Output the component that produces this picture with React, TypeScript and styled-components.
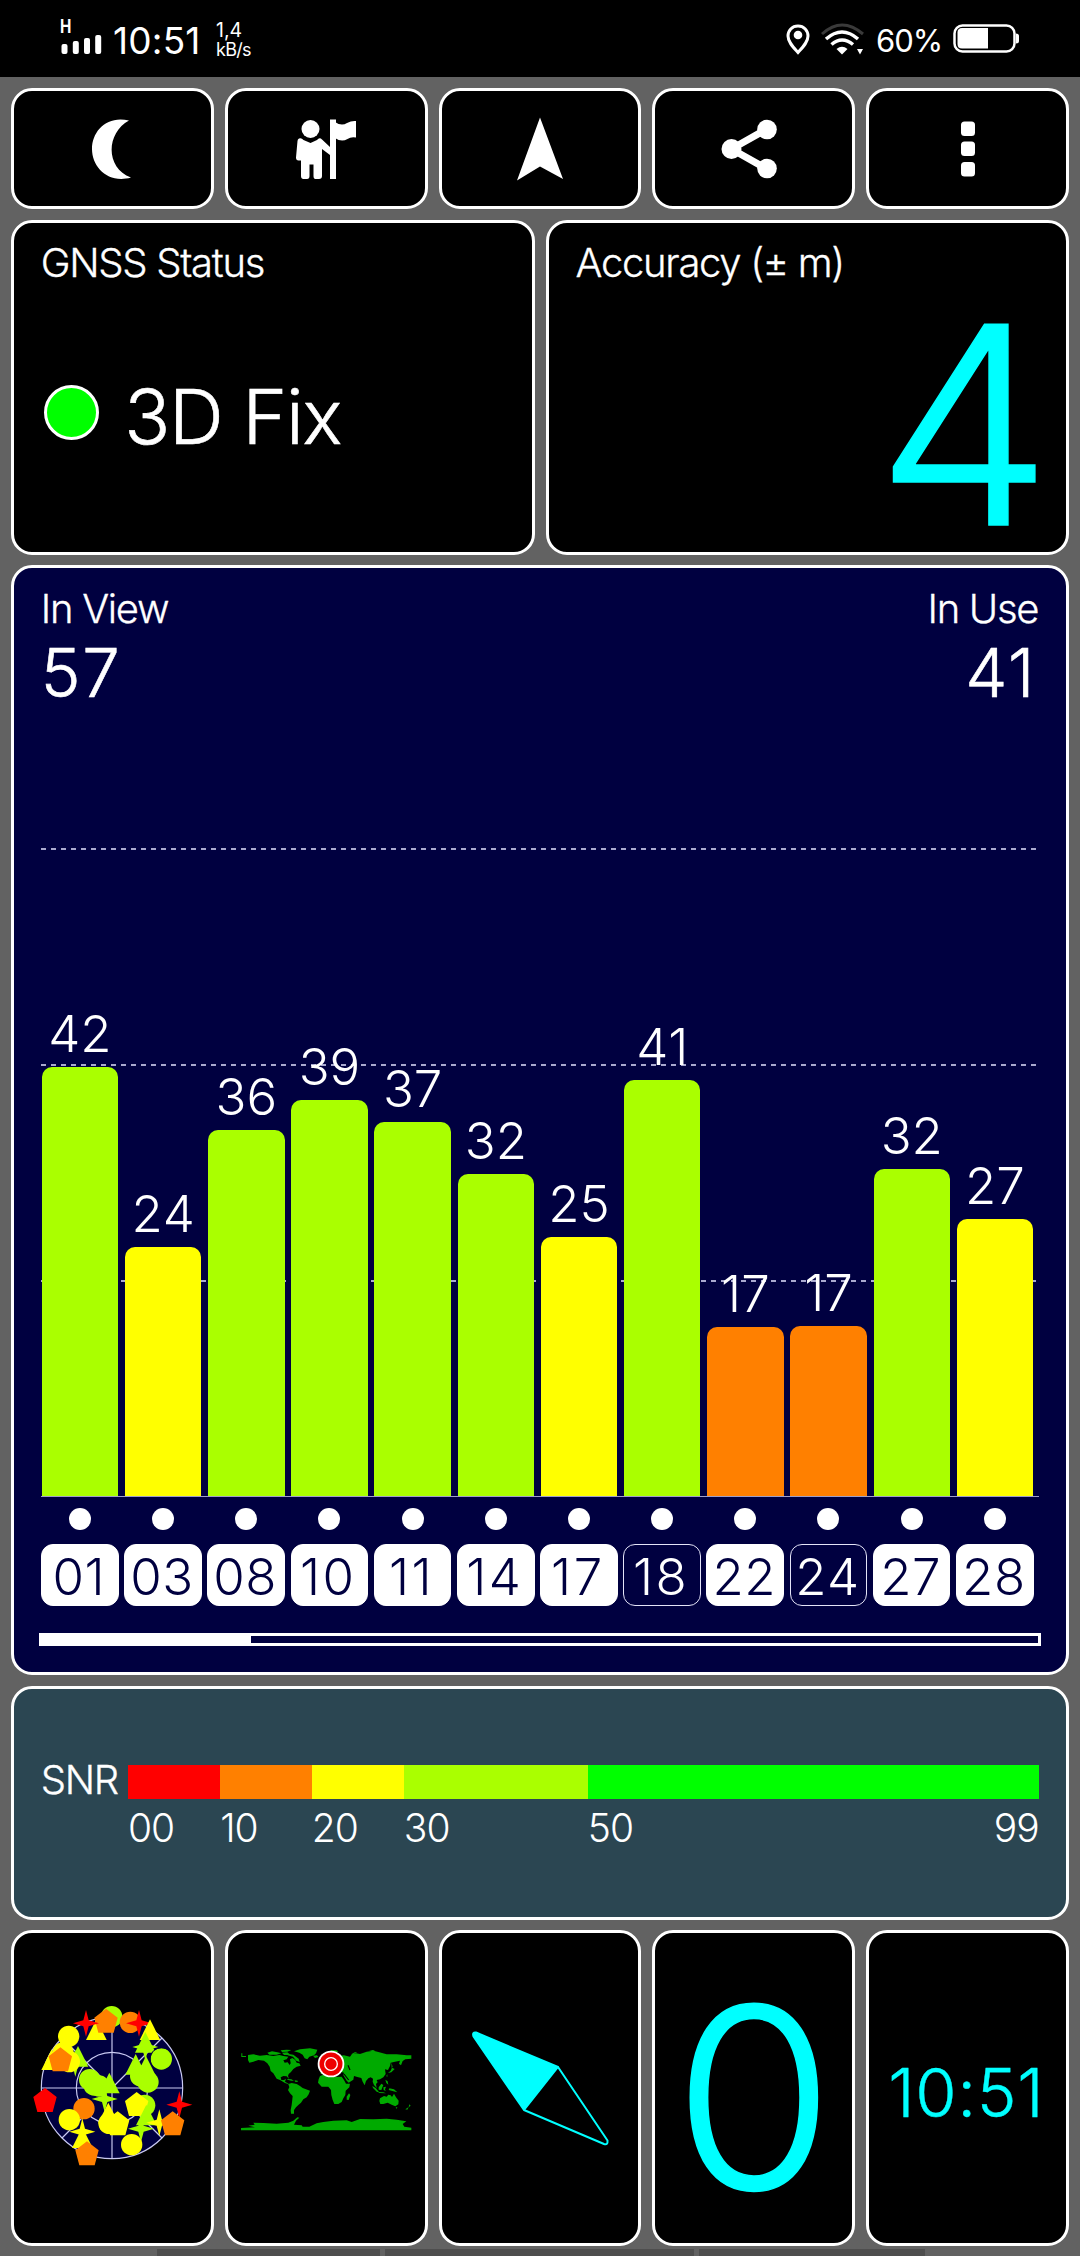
import React from "react";
import styled, { createGlobalStyle } from "styled-components";

const LIME = "#aaff00";
const YELLOW = "#ffff00";
const ORANGE = "#ff8000";
const RED = "#ff0000";
const GREEN = "#00ff00";
const CYAN = "#00ffff";
const NAVY = "#000040";

const GlobalStyle = createGlobalStyle`
  *, *::before, *::after { box-sizing: border-box; }
  body {
    margin: 0;
    background: #626262;
    color: #fff;
    font-family: Inter, "Liberation Sans", sans-serif;
  }
`;

const Screen = styled.div`
  display: flex;
  flex-direction: column;
  width: 1080px;
  height: 2256px;
  overflow: hidden;
  background: #626262;
`;

/* ---------- system status bar ---------- */

const StatusBar = styled.header`
  display: flex;
  justify-content: space-between;
  height: 77px;
  flex: none;
  padding: 0 61px 0 60px;
  background: #000;
`;

const StatusSide = styled.div`
  display: flex;
  align-items: flex-start;
`;

const SignalIcon = styled.div`
  display: flex;
  flex-direction: column;
  gap: 0;
  width: 42px;
  margin-top: 20px;
`;

const NetworkType = styled.span`
  font-size: 19px;
  font-weight: 700;
  line-height: 14px;
  transform: scaleX(0.8);
  transform-origin: left;
`;

const StatusClock = styled.span`
  margin: 27px 0 0 11px;
  width: 103px;
  font-size: 37px;
  line-height: 27px;
  letter-spacing: 0.2px;
`;

const Speed = styled.div`
  display: flex;
  flex-direction: column;
  gap: 6px;
  margin-top: 22.5px;
  font-size: 19.5px;
  line-height: 14px;
  white-space: nowrap;
`;

const SpeedUnit = styled.span`
  font-size: 18px;
  letter-spacing: -0.7px;
`;

const BatteryLabel = styled.span`
  width: 77px;
  margin-top: 29px;
  font-size: 31px;
  line-height: 23px;
  letter-spacing: -1px;
`;

const StatusGlyph = styled.svg<{ $mt: number; $mr: number }>`
  display: block;
  margin-top: ${(p) => p.$mt}px;
  margin-right: ${(p) => p.$mr}px;
`;

/* ---------- panels ---------- */

const Content = styled.main`
  display: flex;
  flex-direction: column;
  gap: 10.7px;
  padding: 11px 10.8px 0;
`;

const Row = styled.div<{ $cols: number; $h: number }>`
  display: grid;
  grid-template-columns: repeat(${(p) => p.$cols}, 1fr);
  gap: 11px;
  height: ${(p) => p.$h}px;
`;

const Card = styled.section<{ $bg?: string }>`
  min-width: 0;
  border: 3px solid #fff;
  border-radius: 21px;
  background: ${(p) => p.$bg ?? "#000"};
`;

const CenterCard = styled(Card)<{ $shift?: number }>`
  display: flex;
  align-items: center;
  justify-content: center;
  padding-right: ${(p) => p.$shift ?? 0}px;
  svg { display: block; }
`;

const InfoCard = styled(Card)`
  display: flex;
  flex-direction: column;
  padding: 25px 26px 0;
`;

const Title = styled.h2`
  margin: 0;
  padding-left: 1px;
  font-size: 40px;
  font-weight: 300;
  line-height: 29px;
  letter-spacing: -1.3px;
  white-space: nowrap;
  -webkit-text-stroke: 0.3px #fff;
`;

const Fix = styled.div`
  display: flex;
  align-items: center;
  gap: 25.5px;
  margin: 104px 0 0 4px;
`;

const FixDot = styled.span`
  width: 55px;
  height: 55px;
  border: 3px solid #fff;
  border-radius: 50%;
  background: ${GREEN};
`;

const FixText = styled.span`
  padding-top: 8px;
  font-size: 76px;
  font-weight: 300;
  line-height: 55px;
  letter-spacing: -1.3px;
  -webkit-text-stroke: 0.6px #fff;
`;

const BigValue = styled.div`
  align-self: flex-end;
  margin: 48px -12px 0 0;
  font-size: 276px;
  font-weight: 300;
  line-height: 201px;
  color: ${CYAN};
  transform: scaleX(1.02);
  transform-origin: right;
  -webkit-text-stroke: 1.5px ${CYAN};
`;

/* ---------- satellite chart ---------- */

const ChartCard = styled(Card)`
  height: 1109.5px;
  padding: 25.6px 25px 0 26px;
`;

const Split = styled.div<{ $mt?: number; $pad?: string }>`
  display: flex;
  justify-content: space-between;
  margin-top: ${(p) => p.$mt ?? 0}px;
  padding: ${(p) => p.$pad ?? "0"};
`;

const Count = styled.span`
  font-size: 67px;
  font-weight: 300;
  line-height: 49px;
  letter-spacing: 1.8px;
  -webkit-text-stroke: 0.6px #fff;
`;

const Plot = styled.div`
  display: grid;
  height: 649px;
  margin: 151px 2px 0 1.2px;
  border-bottom: 1.5px solid #a0a0c8;
  & > * { grid-area: 1 / 1; }
`;

const GridLines = styled.div`
  display: flex;
  flex-direction: column;
  gap: 214px;
`;

const GridLine = styled.i`
  width: 996px;
  height: 2px;
  background: repeating-linear-gradient(90deg, #a9a9cf 0 5px, transparent 5px 10px);
`;

const Bars = styled.div`
  display: grid;
  grid-template-columns: repeat(12, 76.5px);
  column-gap: 6.7px;
  align-items: end;
  padding-left: 0.7px;
`;

const BarColumn = styled.div`
  display: flex;
  flex-direction: column;
  align-items: center;
  gap: 15px;
`;

const BarValue = styled.span`
  font-size: 51px;
  font-weight: 300;
  line-height: 37px;
  font-kerning: none;
`;

const Bar = styled.div<{ $color: string }>`
  align-self: stretch;
  border-radius: 10px 10px 0 0;
  background: ${(p) => p.$color};
`;

const Chips = styled.div`
  display: grid;
  grid-template-columns: repeat(12, 77.6px);
  column-gap: 5.6px;
  justify-items: center;
  row-gap: 14px;
  grid-template-rows: 22px 62px;
  grid-auto-flow: column;
  margin: 11px 0 0 1.2px;
`;

const UsedDot = styled.i`
  width: 22px;
  height: 22px;
  border-radius: 50%;
  background: #fff;
`;

const Chip = styled.span<{ $outline?: boolean; $wide?: boolean }>`
  display: flex;
  align-items: center;
  justify-content: center;
  width: 100%;
  padding: 3px 2px 0 0;
  border: 1.5px solid ${(p) => (p.$outline ? "#e4e4f8" : "#fff")};
  border-radius: 12px;
  background: ${(p) => (p.$outline ? "transparent" : "#fff")};
  color: ${(p) => (p.$outline ? "#fff" : NAVY)};
  font-size: 51px;
  font-weight: 300;
  line-height: 37px;
  font-kerning: none;
  letter-spacing: ${(p) => (p.$wide ? 2.5 : 0.5)}px;
`;

const Progress = styled.div`
  display: flex;
  height: 13px;
  margin: 27px 0 0 -0.8px;
  border: 3px solid #fff;
`;

const ProgressFill = styled.div`
  width: 21%;
  background: #fff;
`;

/* ---------- SNR legend ---------- */

const LegendCard = styled(Card)`
  display: grid;
  grid-template-columns: 88.2px 1fr;
  align-content: start;
  row-gap: 14px;
  height: 234.2px;
  padding: 76.5px 27.6px 0 26px;
`;

const LegendBar = styled.div`
  display: grid;
  grid-template-columns: 92.2px 91.7px 92px 184px 1fr;
  grid-column: 2;
  height: 33.5px;
`;

const LegendLabel = styled(Title)`
  align-self: start;
`;

const Segment = styled.span<{ $color: string }>`
  background: ${(p) => p.$color};
`;

const LegendScale = styled(LegendBar)`
  font-size: 39px;
  font-weight: 300;
  line-height: 29px;
  letter-spacing: -1px;
`;

const LegendEnds = styled.span`
  display: flex;
  justify-content: space-between;
`;

/* ---------- bottom shortcuts ---------- */

const SpeedValue = styled.span`
  padding-top: 19px;
  font-size: 252px;
  font-weight: 300;
  line-height: 189px;
  color: ${CYAN};
  transform: scaleX(1.03);
  -webkit-text-stroke: 1.5px ${CYAN};
`;

const ClockValue = styled.span`
  padding: 8px 1px 0 0;
  font-size: 67px;
  font-weight: 300;
  line-height: 49px;
  letter-spacing: 0.6px;
  color: ${CYAN};
  -webkit-text-stroke: 0.4px ${CYAN};
`;

const Dock = styled.footer`
  display: flex;
  gap: 5px;
  margin: 3px 0 0 157px;
`;

const DockTab = styled.span<{ $w: number }>`
  flex: none;
  width: ${(p) => p.$w}px;
  height: 7px;
  background: #4e4e4e;
`;

/* ---------- data ---------- */

const satellites = [
  { id: "01", snr: 42, height: 429, color: LIME },
  { id: "03", snr: 24, height: 249, color: YELLOW },
  { id: "08", snr: 36, height: 366, color: LIME },
  { id: "10", snr: 39, height: 396, color: LIME },
  { id: "11", snr: 37, height: 374, color: LIME },
  { id: "14", snr: 32, height: 322, color: LIME },
  { id: "17", snr: 25, height: 259, color: YELLOW },
  { id: "18", snr: 41, height: 416, color: LIME, outline: true },
  { id: "22", snr: 17, height: 169, color: ORANGE },
  { id: "24", snr: 17, height: 170, color: ORANGE, outline: true },
  { id: "27", snr: 32, height: 327, color: LIME },
  { id: "28", snr: 27, height: 277, color: YELLOW },
];

type Shape = "circle" | "pentagon" | "star" | "triangle";
type Mark = [Shape, number, number, string];

const marks: Mark[] = [
  ["circle", 275, 110, LIME],
  ["triangle", 229, 152, YELLOW],
  ["pentagon", 258, 124, ORANGE],
  ["star", 198, 130, RED],
  ["circle", 331, 127, ORANGE],
  ["star", 357, 130, RED],
  ["triangle", 390, 152, YELLOW],
  ["star", 166, 250, LIME],
  ["triangle", 174, 232, LIME],
  ["triangle", 95, 242, YELLOW],
  ["circle", 129, 219, YELLOW],
  ["circle", 148, 245, YELLOW],
  ["circle", 146, 169, YELLOW],
  ["pentagon", 121, 240, ORANGE],
  ["star", 376, 201, LIME],
  ["triangle", 376, 190, LIME],
  ["circle", 424, 237, LIME],
  ["triangle", 347, 256, LIME],
  ["circle", 362, 288, LIME],
  ["triangle", 378, 262, LIME],
  ["circle", 384, 306, LIME],
  ["circle", 209, 299, LIME],
  ["circle", 222, 315, LIME],
  ["circle", 237, 318, LIME],
  ["triangle", 268, 312, LIME],
  ["star", 254, 357, LIME],
  ["pentagon", 75, 362, RED],
  ["star", 478, 374, RED],
  ["circle", 374, 376, LIME],
  ["pentagon", 350, 374, YELLOW],
  ["triangle", 379, 408, LIME],
  ["star", 418, 428, YELLOW],
  ["star", 363, 446, LIME],
  ["pentagon", 458, 432, ORANGE],
  ["circle", 192, 386, ORANGE],
  ["triangle", 265, 402, YELLOW],
  ["circle", 267, 430, YELLOW],
  ["pentagon", 293, 432, YELLOW],
  ["circle", 148, 419, YELLOW],
  ["triangle", 187, 476, YELLOW],
  ["star", 187, 455, YELLOW],
  ["pentagon", 201, 522, ORANGE],
  ["circle", 335, 494, YELLOW],
];

const outlines: Record<Exclude<Shape, "circle">, string> = {
  pentagon: "0,-38 35,-11 23,34 -23,34 -35,-11",
  star: "0,-40 8,-9 39,0 8,9 0,40 -8,9 -39,0 -8,-9",
  triangle: "0,-34 31,28 -31,28",
};

function SkyPlot() {
  return (
    <svg width="190" height="200" viewBox="-9 24 570 600">
      <circle cx="276" cy="324" r="212" fill={NAVY} />
      <g fill="none" stroke="#c9c9f2" strokeWidth="3.5">
        <circle cx="276" cy="324" r="212" />
        <circle cx="276" cy="324" r="107" />
        <path d="M276 112V536M64 324H488M126 174l150 150M426 174L276 324M126 474l75-75M426 474l-75-75" />
      </g>
      {marks.map(([shape, x, y, color], i) =>
        shape === "circle" ? (
          <circle key={i} cx={x} cy={y} r="32" fill={color} />
        ) : (
          <polygon key={i} points={outlines[shape]} transform={`translate(${x} ${y})`} fill={color} />
        )
      )}
      <circle cx="424" cy="237" r="34" fill="none" stroke={NAVY} strokeWidth="3" strokeDasharray="110 104" strokeDashoffset="-80" />
    </svg>
  );
}

function WorldMap() {
  return (
    <svg width="180" height="100" viewBox="48 114 540 300">
      <g fill="#00aa00">
        <path d="M84 165L100 163 120 167 140 165 160 168 178 165 190 168 205 170 200 178 190 181 194 188 203 187 209 195 212 190 210 178 217 174 226 180 230 188 238 190 242 197 230 200 220 207 213 216 206 222 204 228 207 237 200 229 190 228 182 232 184 240 192 240 198 236 195 245 203 250 210 254 195 249 180 240 170 236 160 220 152 213 149 200 142 190 132 182 115 180 100 185 88 188 84 180Z" />
        <path d="M142 158l14-4 16 3 12 3-14 4-22 0zM182 151l18-2 14 1-12 5-16 1zM186 158l16-1 10 8-20 0zM206 162l14 2 16 12 3 10-10-4-10-12-16-4zM64 160h3v8h11v3H64z" />
        <path d="M222 154L240 148 270 145 292 149 288 160 282 166 268 170 262 178 254 175 248 164 238 158Z" />
        <path d="M205 252L215 249 230 252 240 258 248 264 270 272 266 283 260 292 250 298 243 308 235 315 228 322 222 330 222 341 213 341 212 330 215 315 217 298 218 288 210 280 204 270 208 262Z" />
        <path d="M202 237l12 1 8 4-8 0-12-3zM224 241l9 1 0 4-8-1zM279 167l12-1 4 5-10 3z" />
        <path d="M300 228L315 222 332 226 345 231 365 230 372 240 378 251 390 251 388 262 377 272 376 285 370 295 365 306 355 312 343 312 338 300 334 285 333 270 325 260 305 260 294 248 296 238Z" />
        <path d="M387 280L391 285 386 300 380 299 380 290Z" />
        <path d="M302 222L302 212 312 210 318 200 330 195 330 175 340 163 355 160 358 167 372 166 390 170 396 162 408 160 420 162 440 155 460 152 475 156 500 163 530 163 560 166 574 166 574 176 556 178 548 183 543 196 537 191 540 182 525 185 512 188 510 198 504 210 495 208 497 222 490 232 480 238 470 240 473 247 468 252 470 264 462 255 458 245 459 236 452 232 445 235 438 243 434 256 428 245 424 234 412 231 402 228 400 239 386 248 380 242 370 226 372 218 355 214 345 217 338 222 330 210 318 212 312 222Z" />
        <path d="M330 150l20 1 5 4-14 3zM394 163l10-6 8-1-12 7zM447 152l12-2 8 4zM514 188l4 12-3 4zM516 203l8 4-10 10-10 2 8-7zM499 228l3-5 0 8zM496 239l7 5 2 10-6-5z" />
        <path d="M457 258l10 6 10 12-6 0-12-12zM474 276l16 1 8 3-20-1zM476 262l8-11 6 4-6 15-8-1zM490 262l8-2-3 8 2 5-6-3zM508 265l14 3 10 9-12-3-14-4z" />
        <path d="M480 295L492 288 500 290 505 284 512 286 516 291 522 281 528 292 536 302 535 313 526 319 515 314 503 308 490 312 481 312 478 303ZM527 322l5 0-2 5zM568 313l4 4-6 5zM556 328l10-7-4 8z" />
        <path d="M63 384L105 382 85 377 104 374 100 368 130 369 170 371 205 368 220 362 232 352 238 353 228 362 222 374 245 376 248 380 268 380 290 370 310 366 340 362 380 361 395 366 420 357 460 358 500 356 530 359 559 364 548 372 553 380 574 383 574 391 63 391Z" />
      </g>
      <path d="M372 222l14 18M384 196l6 14" stroke="#000" strokeWidth="3.5" />
      <circle cx="333" cy="192" r="40" fill="#fff" />
      <circle cx="333" cy="192" r="34.5" fill="#ee0000" />
      <circle cx="333" cy="192" r="19" fill="#ee0000" stroke="#fff" strokeWidth="4" />
    </svg>
  );
}

function Compass() {
  return (
    <svg width="150" height="130" viewBox="0 0 150 130" fill="none" stroke={CYAN} strokeWidth="2" strokeLinejoin="round">
      <path d="M11 9.5L93 44 59 87 8.500 13.500Q7 9 11 9.500Z" fill={CYAN} />
      <path d="M93 44L142.500 117.500Q143 122.500 139 121L59 87" />
    </svg>
  );
}

const PersonFlag = () => (
  <svg width="62" height="62" viewBox="0 0 62 62" fill="#fff">
    <circle cx="15.500" cy="11" r="9" />
    <path d="M4 20.500Q6.500 19.500 8.500 22L15.500 25 22 22Q24.500 19 27 21.500L35 29V37L27 31V58Q27 61 24 61H20.500Q18.500 61 18.500 58V46.500H14.500V58Q14.500 61 12 61H8.500Q6 61 6 58V42.500H3.500Q1 42.500 1 39.500L2.500 23Q2.600 21 4 20.500Z" />
    <path d="M35 1.500H41V61H35Z" />
    <path d="M40 4Q46.500 8.500 52 5 56.500 2.500 61 3V19.500Q56 18.500 52.500 21 46.500 24.500 40 20Z" />
  </svg>
);

export default function App() {
  return (
    <Screen>
      <GlobalStyle />
      <StatusBar>
        <StatusSide>
          <SignalIcon>
            <NetworkType>H</NetworkType>
            <svg width="42" height="20" viewBox="0 0 42 20" fill="#fff">
              <rect x="1.500" y="10" width="6" height="10" rx="2" />
              <rect x="12.800" y="7" width="6" height="13" rx="2" />
              <rect x="24" y="4" width="6" height="16" rx="2" />
              <rect x="35.200" y="1" width="6" height="19" rx="2" />
            </svg>
          </SignalIcon>
          <StatusClock>10:51</StatusClock>
          <Speed>
            <span>1,4</span>
            <SpeedUnit>kB/s</SpeedUnit>
          </Speed>
        </StatusSide>
        <StatusSide>
          <StatusGlyph $mt={24} $mr={11} width="24" height="31" viewBox="0 0 24 31">
            <path d="M12 2C6 2 2 6.500 2 12 2 18 7 23 12 28.500 17 23 22 18 22 12 22 6.500 18 2 12 2Z" fill="none" stroke="#fff" strokeWidth="3" />
            <circle cx="12" cy="11" r="4.300" fill="#fff" />
          </StatusGlyph>
          <StatusGlyph $mt={23} $mr={11} width="44" height="32" viewBox="0 0 44 32" fill="none" stroke="#fff" strokeWidth="3">
            <path d="M1 11Q21 -7 42 11" stroke="#3a3a3a" />
            <path d="M5 16Q21 2 37 16" strokeWidth="3.500" />
            <path d="M10.500 21.500Q21 12.500 32 21.500" strokeWidth="3.500" />
            <path d="M15.500 26Q21 21.500 26.500 26L21 31.500Z" fill="#fff" stroke="none" />
            <path d="M36 26H42L39 31.500Z" fill="#fff" stroke="none" />
          </StatusGlyph>
          <BatteryLabel>60%</BatteryLabel>
          <StatusGlyph $mt={24} $mr={0} width="66" height="29" viewBox="0 0 66 29">
            <rect x="1.500" y="1.500" width="60" height="26" rx="8" fill="none" stroke="#fff" strokeWidth="2.500" />
            <path d="M9 4H35V24.500H9Q4.500 24.500 4.500 20V8.500Q4.500 4 9 4Z" fill="#fff" />
            <path d="M63 9.500Q66 9.500 66 12V17Q66 19.500 63 19.500Z" fill="#fff" />
          </StatusGlyph>
        </StatusSide>
      </StatusBar>

      <Content>
        <Row $cols={5} $h={121}>
          <CenterCard>
            <svg width="42" height="62" viewBox="0 0 42 62">
              <path d="M38 2.500C16 -3 1 13 1 31S17 66 40 59.500C14 50 15 15 38 2.500Z" fill="#fff" />
            </svg>
          </CenterCard>
          <CenterCard>
            <PersonFlag />
          </CenterCard>
          <CenterCard>
            <svg width="48" height="64" viewBox="0 0 48 64">
              <path d="M24 .5L47 62 24 49.500 1 63.500Z" fill="#fff" />
            </svg>
          </CenterCard>
          <CenterCard $shift={9}>
            <svg width="58" height="60" viewBox="0 0 58 60" fill="#fff" stroke="#fff">
              <path d="M46 10.500L11.500 30 46 49.500" fill="none" strokeWidth="7" />
              <circle cx="47" cy="10.500" r="9.800" stroke="none" />
              <circle cx="11.500" cy="30" r="10" stroke="none" />
              <circle cx="47" cy="49.500" r="9.800" stroke="none" />
            </svg>
          </CenterCard>
          <CenterCard>
            <svg width="14" height="56" viewBox="0 0 14 56" fill="#fff">
              <rect width="14" height="14.500" y=".5" rx="3.500" />
              <rect width="14" height="14.500" y="20.500" rx="3.500" />
              <rect width="14" height="14.500" y="41" rx="3.500" />
            </svg>
          </CenterCard>
        </Row>

        <Row $cols={2} $h={335}>
          <InfoCard>
            <Title>GNSS Status</Title>
            <Fix>
              <FixDot />
              <FixText>3D Fix</FixText>
            </Fix>
          </InfoCard>
          <InfoCard>
            <Title>Accuracy (± m)</Title>
            <BigValue>4</BigValue>
          </InfoCard>
        </Row>

        <ChartCard $bg={NAVY}>
          <Split $pad="0 3px 0 0">
            <Title>In View</Title>
            <Title>In Use</Title>
          </Split>
          <Split $mt={25} $pad="0 5px 0 1px">
            <Count>57</Count>
            <Count>41</Count>
          </Split>
          <Plot>
            <GridLines>
              <GridLine />
              <GridLine />
              <GridLine />
            </GridLines>
            <Bars>
              {satellites.map((s) => (
                <BarColumn key={s.id}>
                  <BarValue>{s.snr}</BarValue>
                  <Bar $color={s.color} style={{ height: s.height }} />
                </BarColumn>
              ))}
            </Bars>
          </Plot>
          <Chips>
            {satellites.map((s) => (
              <React.Fragment key={s.id}>
                <UsedDot />
                <Chip $outline={s.outline} $wide={s.id.startsWith("1")}>
                  {s.id}
                </Chip>
              </React.Fragment>
            ))}
          </Chips>
          <Progress>
            <ProgressFill />
          </Progress>
        </ChartCard>

        <LegendCard $bg="#2b4652">
          <LegendLabel>SNR</LegendLabel>
          <LegendBar>
            <Segment $color={RED} />
            <Segment $color={ORANGE} />
            <Segment $color={YELLOW} />
            <Segment $color={LIME} />
            <Segment $color={GREEN} />
          </LegendBar>
          <LegendScale>
            <span>00</span>
            <span>10</span>
            <span>20</span>
            <span>30</span>
            <LegendEnds>
              <span>50</span>
              <span>99</span>
            </LegendEnds>
          </LegendScale>
        </LegendCard>

        <Row $cols={5} $h={315.3}>
          <CenterCard>
            <SkyPlot />
          </CenterCard>
          <CenterCard>
            <WorldMap />
          </CenterCard>
          <CenterCard>
            <Compass />
          </CenterCard>
          <CenterCard>
            <SpeedValue>0</SpeedValue>
          </CenterCard>
          <CenterCard $shift={2}>
            <ClockValue>10:51</ClockValue>
          </CenterCard>
        </Row>
      </Content>
      <Dock>
        <DockTab $w={223} />
        <DockTab $w={309} />
        <DockTab $w={226} />
      </Dock>
    </Screen>
  );
}
